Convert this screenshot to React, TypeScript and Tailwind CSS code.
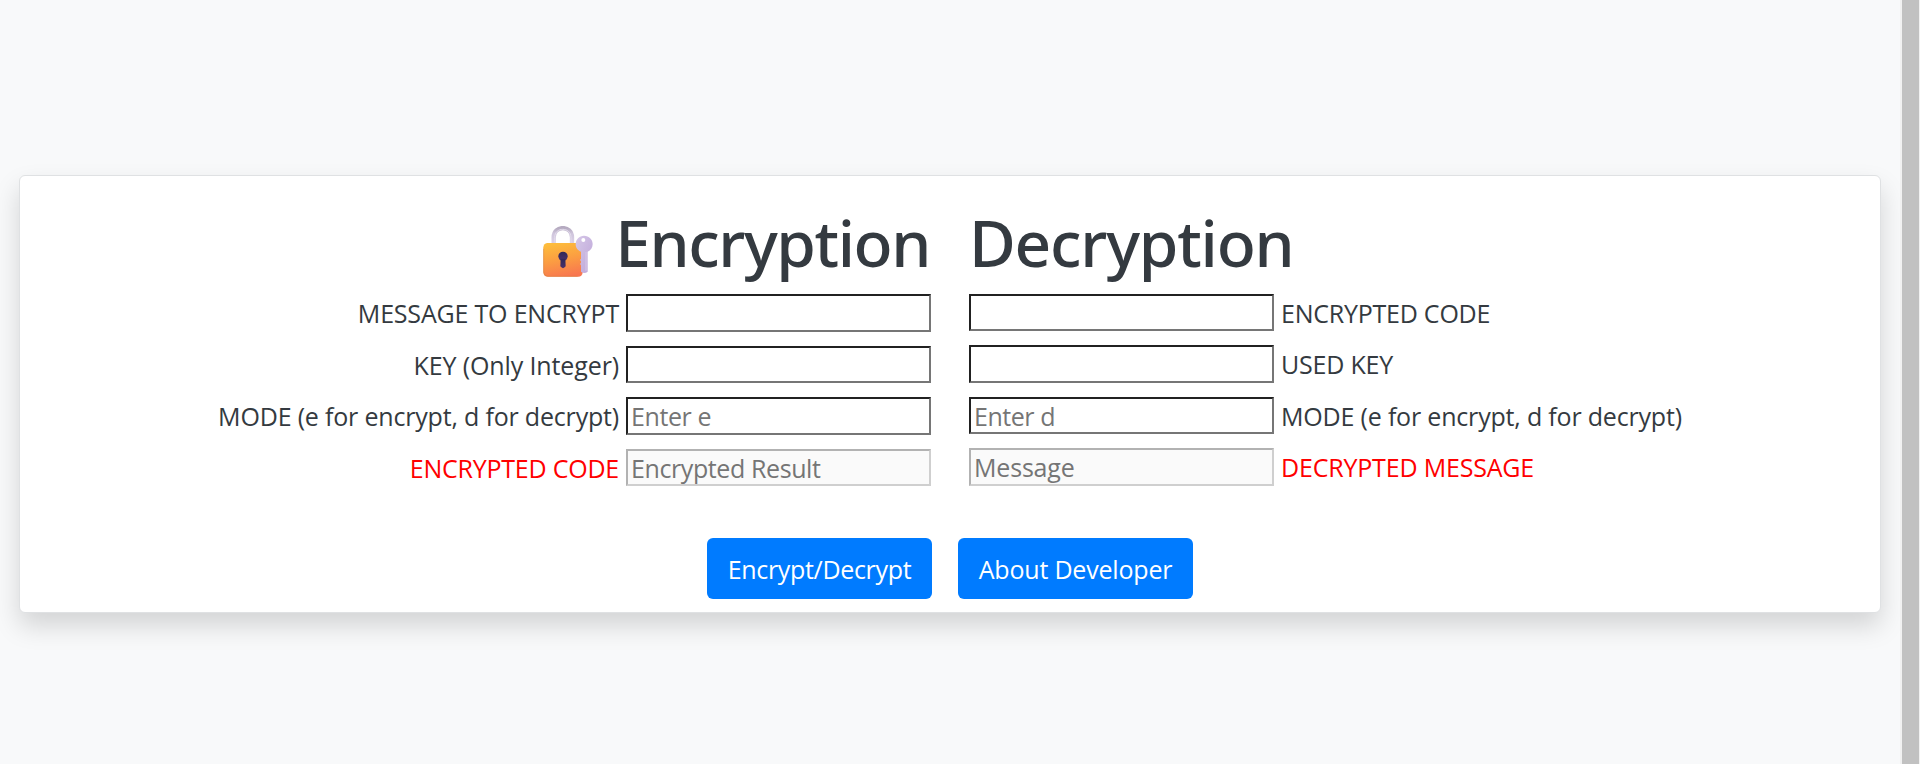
import React from "react";

type Field = {
  label: string;
  placeholder?: string;
  result?: boolean;
  rowClass: string;
  inputClass: string;
  labelClass: string;
};

const encryptFields: Field[] = [
  { label: "MESSAGE TO ENCRYPT", rowClass: "h-[52px]", inputClass: "h-[38px]", labelClass: "tracking-[-0.19px]" },
  { label: "KEY (Only Integer)", rowClass: "h-[51px]", inputClass: "h-[37px]", labelClass: "tracking-[-0.12px]" },
  { label: "MODE (e for encrypt, d for decrypt)", placeholder: "Enter e", rowClass: "h-[52px]", inputClass: "h-[38px] tracking-[-0.4px]", labelClass: "tracking-[-0.185px]" },
  { label: "ENCRYPTED CODE", placeholder: "Encrypted Result", result: true, rowClass: "h-[51px]", inputClass: "h-[37px] tracking-[-0.4px]", labelClass: "tracking-[-0.233px]" },
];

const decryptFields: Field[] = [
  { label: "ENCRYPTED CODE", rowClass: "h-[51px]", inputClass: "h-[37px]", labelClass: "tracking-[-0.233px]" },
  { label: "USED KEY", rowClass: "h-[52px]", inputClass: "h-[38px]", labelClass: "tracking-[-0.194px]" },
  { label: "MODE (e for encrypt, d for decrypt)", placeholder: "Enter d", rowClass: "h-[51px]", inputClass: "h-[37px] tracking-[-0.45px]", labelClass: "tracking-[-0.185px]" },
  { label: "DECRYPTED MESSAGE", placeholder: "Message", result: true, rowClass: "h-[52px]", inputClass: "h-[38px] tracking-[-0.186px]", labelClass: "tracking-[-0.187px]" },
];

function LockWithKey() {
  return (
    <svg className="mt-[21px] mr-[22px] h-[51px] w-[50px] shrink-0" viewBox="0 0 150 153" aria-hidden="true">
      <defs>
        <linearGradient id="body" x1="0.35" y1="0" x2="0.6" y2="1">
          <stop offset="0" stopColor="#fdbc3c" />
          <stop offset="0.5" stopColor="#fb9c42" />
          <stop offset="1" stopColor="#f87650" />
        </linearGradient>
        <linearGradient id="shackle" x1="0" y1="0" x2="0" y2="1">
          <stop offset="0" stopColor="#b5aac0" />
          <stop offset="0.3" stopColor="#cfc5dc" />
          <stop offset="1" stopColor="#dfd5ea" />
        </linearGradient>
        <linearGradient id="key" x1="0" y1="0" x2="1" y2="1">
          <stop offset="0" stopColor="#d6c8e8" />
          <stop offset="1" stopColor="#bda5d8" />
        </linearGradient>
        <linearGradient id="hole" x1="0" y1="0" x2="0" y2="1">
          <stop offset="0" stopColor="#2f2858" />
          <stop offset="1" stopColor="#4c316b" />
        </linearGradient>
      </defs>
      <path d="M32 60 V34 C32 -3 87 -3 87 34 V60" fill="none" stroke="url(#shackle)" strokeWidth="13" />
      <path d="M35 50 V34 C35 2 84 2 84 34 V50" fill="none" stroke="#e3dcec" strokeWidth="3" />
      <rect x="1" y="51" width="118" height="101" rx="13" fill="url(#body)" />
      <path d="M2 68 V138 Q3 150 15 151 H104" fill="none" stroke="#d9843d" strokeOpacity="0.55" strokeWidth="3" />
      <circle cx="60" cy="91" r="14" fill="url(#hole)" />
      <path d="M53 98 H67 L68 121 Q60 132 52 121 Z" fill="url(#hole)" />
      <path
        d="M123 29 C109 29 98 40 98 54 C98 66 105 74 114 77 V98 L111 102 L114 106 V110 L111 114 L114 118 V137 Q124 145 134 137 V77 C143 73 149 65 149 54 C149 40 138 29 123 29 Z"
        fill="url(#key)"
      />
      <path d="M129 78 V134" stroke="#d3c3e6" strokeWidth="4" />
      <circle cx="121" cy="42" r="6" fill="#ffffff" />
    </svg>
  );
}

function Row({ field, reverse }: { field: Field; reverse?: boolean }) {
  const tone = field.result
    ? "border-t-[#b2b2b2] border-l-[#b2b2b2] border-r-[#cfcfcf] border-b-[#cfcfcf] bg-[#fafafa]"
    : "border-t-[#212121] border-l-[#212121] border-r-[#767676] border-b-[#767676] bg-white";
  return (
    <div className={`${field.rowClass} ${reverse ? "flex-row-reverse justify-end" : "justify-end"} flex items-start gap-[7px]`}>
      <label className={`${field.labelClass} ${field.result ? "text-[#ff0000]" : "text-[#343a40]"} whitespace-nowrap leading-[38px]`}>
        {field.label}
      </label>
      <input
        type="text"
        aria-label={field.label}
        placeholder={field.placeholder}
        disabled={field.result}
        className={`${field.inputClass} ${tone} ${field.inputClass.includes("h-[38px]") ? "pb-[2px]" : "pb-[1px]"} w-[305px] shrink-0 border-2 px-[3px] pt-[2px] leading-[30px] placeholder:text-[#757575]`}
      />
    </div>
  );
}

export default function App() {
  return (
    <div className="flex h-[764px] w-full overflow-hidden bg-[#f8f9fa] font-['Open_Sans','Noto_Sans',sans-serif] text-[25px] text-[#343a40]">
      <main className="flex-1 pt-[175px] pl-[19px]">
        <section className="h-[438px] w-[1862px] rounded-[6px] border border-[#dfe1e3] bg-white shadow-[0_13px_26px_rgba(0,0,0,0.15)]">
          <div className="flex gap-[38px]">
            <div className="w-[911px]">
              <h1 className="flex h-[118px] justify-end pt-[29px] font-['Noto_Sans',sans-serif] text-[64px] leading-[76px] font-medium tracking-[-1.4px]">
                <LockWithKey />
                <span className="mr-[1px]">Encryption</span>
              </h1>
              {encryptFields.map((field) => (
                <Row key={field.label} field={field} />
              ))}
            </div>
            <div>
              <h1 className="h-[118px] pt-[29px] font-['Noto_Sans',sans-serif] text-[64px] leading-[76px] font-medium tracking-[-1.2px]">
                Decryption
              </h1>
              {decryptFields.map((field) => (
                <Row key={field.label} field={field} reverse />
              ))}
            </div>
          </div>
          <div className="flex gap-[26px] pt-[38px] pl-[687px] text-white">
            <button className="h-[61px] w-[225px] rounded-[6px] bg-[#007bff] pt-[2px] tracking-[-0.33px]">Encrypt/Decrypt</button>
            <button className="h-[61px] w-[235px] rounded-[6px] bg-[#007bff] pt-[2px] tracking-[-0.2px]">About Developer</button>
          </div>
        </section>
      </main>
      <div className="w-[20px] shrink-0 border-r border-l-2 border-[#f1f1f1] bg-[#c1c1c1]" />
    </div>
  );
}
